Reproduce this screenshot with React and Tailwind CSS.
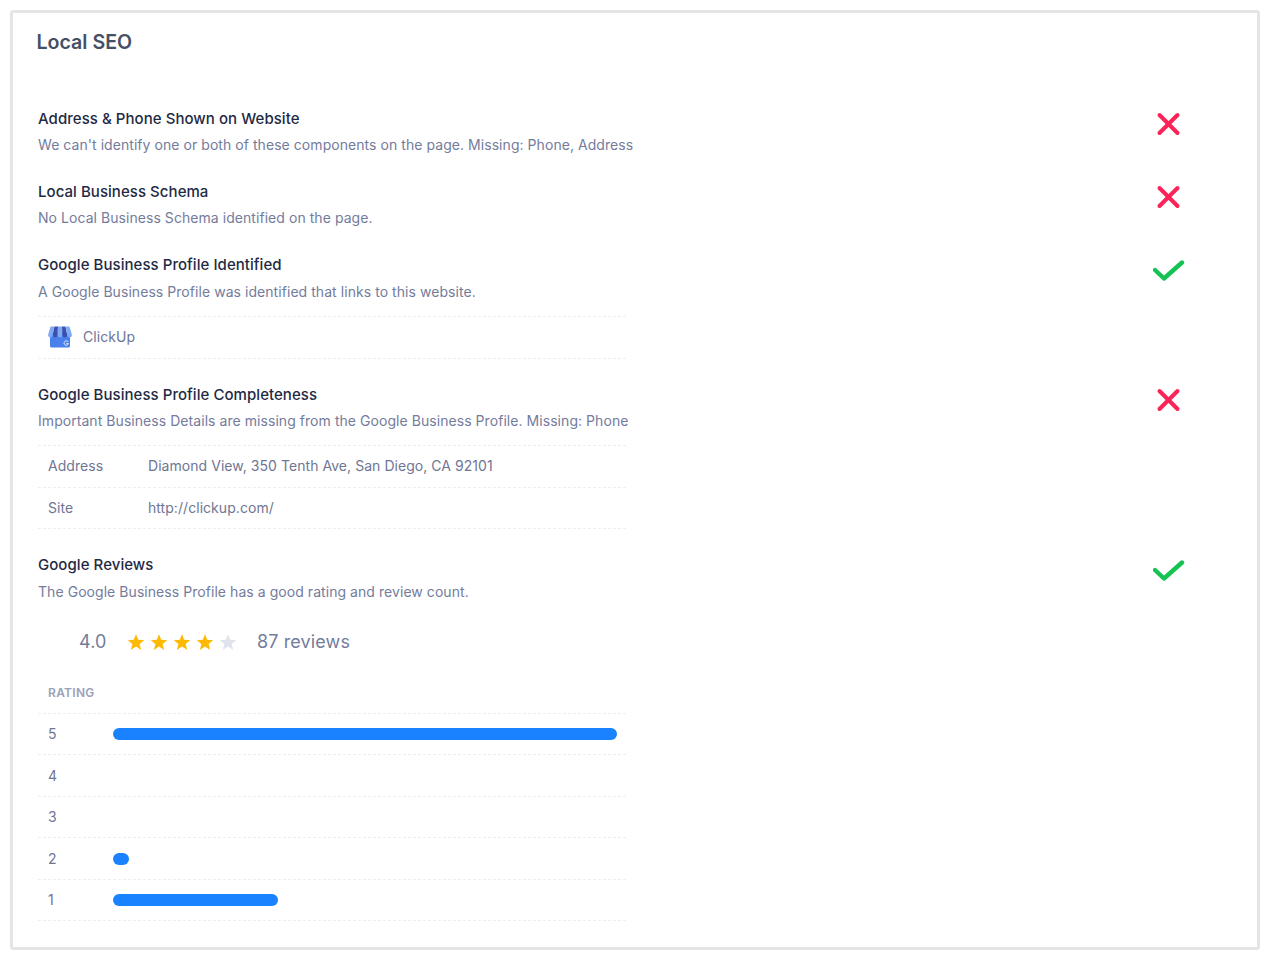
const font = { fontFamily: "Inter, sans-serif" };

function Cross() {
  return (
    <svg width="32" height="32" viewBox="0 0 32 32" fill="none" stroke="#fb2457" strokeWidth="4" strokeLinecap="round">
      <path d="M6.5 7 L24.5 25" />
      <path d="M24.5 7 L6.5 25" />
    </svg>
  );
}

function Check() {
  return (
    <svg width="32" height="32" viewBox="0 0 32 32" fill="none" stroke="#16c254" strokeWidth="4.4" strokeLinecap="round" strokeLinejoin="round">
      <path d="M2 16 L11 24.5 L29 8.5" />
    </svg>
  );
}

function Star({ on }) {
  return (
    <svg width="18" height="18" viewBox="0 0 24 24" fill={on ? "#fcba03" : "#dfe3ec"}>
      <path d="M12 1.5 L15 9 L23 9.5 L16.8 14.6 L18.9 22.5 L12 18.1 L5.1 22.5 L7.2 14.6 L1 9.5 L9 9 Z" />
    </svg>
  );
}

function GbpIcon() {
  return (
    <svg width="24" height="22" viewBox="0 0 24 22">
      <path d="M2 6 H22 V20 A1.5 1.5 0 0 1 20.5 21.5 H3.5 A1.5 1.5 0 0 1 2 20 Z" fill="#4a80ec" />
      <path d="M2.5 0.5 H6.5 L4.8 9 A2.4 2.4 0 0 1 0 9 Z" fill="#7fabf5" />
      <path d="M6.5 0.5 H10 L9.6 9 A2.4 2.4 0 0 1 4.8 9 Z" fill="#3c4fb0" />
      <path d="M10 0.5 H14 L14.4 9 A2.4 2.4 0 0 1 9.6 9 Z" fill="#7fabf5" />
      <path d="M14 0.5 H17.5 L19.2 9 A2.4 2.4 0 0 1 14.4 9 Z" fill="#3c4fb0" />
      <path d="M17.5 0.5 H21.5 L24 9 A2.4 2.4 0 0 1 19.2 9 Z" fill="#7fabf5" />
      <path d="M20.2 16 A2.2 2.2 0 1 0 20.4 17.6 H18.4" fill="none" stroke="#e8f0fe" strokeWidth="1" />
    </svg>
  );
}

function Item({ title, desc, ok, descGap = "mt-[2.5px]", children }) {
  return (
    <div className="flex justify-between">
      <div className="w-[588px]">
        <h4 className="text-[15px] leading-[24px] font-medium tracking-[0.05px] text-[#1f2a44] whitespace-nowrap">{title}</h4>
        <p className={`${descGap} text-[14px] leading-[24px] tracking-[0.055px] text-[#747c9c] whitespace-nowrap`}>{desc}</p>
        {children}
      </div>
      <div className="mr-[72px] mt-[1px] shrink-0">{ok ? <Check /> : <Cross />}</div>
    </div>
  );
}

function DetailRow({ label, value }) {
  return (
    <div className="flex items-center h-[41.5px] px-[10px] border-b border-dashed border-[#eceef2] text-[14px] tracking-[0.05px] text-[#6f7694]">
      <span className="w-[100px] mt-[-1px]">{label}</span>
      <span className="mt-[-1px]">{value}</span>
    </div>
  );
}

function RatingRow({ n, width }) {
  return (
    <div className="flex items-center h-[41.5px] px-[10px] border-b border-dashed border-[#eceef2] text-[14px] text-[#6f7694]">
      <span className="w-[65px] shrink-0 mt-[-1px]">{n}</span>
      {width > 0 && <div className="h-[12px] shrink-0 rounded-full bg-[#1a82ff]" style={{ width }} />}
    </div>
  );
}

export default function App() {
  return (
    <div style={font} className="w-[1270px] h-[960px] bg-white pl-[9.5px] pt-[10px]">
      <div className="h-[940px] w-[1250.5px] border-[3px] border-[#e5e5e5] rounded-[3px] pt-[15px] pl-[25.5px]">
        <h3 className="text-[19.6px] leading-[28px] font-[560] text-[#465064] ml-[-1.5px]">Local SEO</h3>

        <div className="mt-[51px]">
          <Item
            descGap="mt-[2px]"
            title="Address & Phone Shown on Website"
            desc="We can't identify one or both of these components on the page. Missing: Phone, Address"
          />
        </div>
        <div className="mt-[23px]">
          <Item
            descGap="mt-[2px]"
            title="Local Business Schema"
            desc="No Local Business Schema identified on the page."
          />
        </div>
        <div className="mt-[23px]">
          <Item
            ok
            title="Google Business Profile Identified"
            desc="A Google Business Profile was identified that links to this website."
          >
            <div className="mt-[12px] flex items-center gap-[11px] h-[43px] px-[10px] border-y border-dashed border-[#eceef2] text-[14px] tracking-[0.05px] text-[#6f7694]">
              <GbpIcon />
              <span className="mt-[-1px]">ClickUp</span>
            </div>
          </Item>
        </div>
        <div className="mt-[24px]">
          <Item
            title="Google Business Profile Completeness"
            desc="Important Business Details are missing from the Google Business Profile. Missing: Phone"
          >
            <div className="mt-[12px] border-t border-dashed border-[#eceef2]">
              <DetailRow label="Address" value="Diamond View, 350 Tenth Ave, San Diego, CA 92101" />
              <DetailRow label="Site" value="http://clickup.com/" />
            </div>
          </Item>
        </div>
        <div className="mt-[23.5px]">
          <Item
            ok
            descGap="mt-[3px]"
            title="Google Reviews"
            desc="The Google Business Profile has a good rating and review count."
          >
            <div className="mt-[24px] flex items-center h-[28px] pl-[41px] text-[#747c9c] text-[18px] tracking-[0.12px]">
              <span className="w-[48px]">4.0</span>
              <span className="flex gap-[5px]">
                <Star on />
                <Star on />
                <Star on />
                <Star on />
                <Star />
              </span>
              <span className="ml-[20px]">87 reviews</span>
            </div>
            <div className="mt-[25px] h-[33.4px] px-[10px] text-[12px] font-semibold tracking-[0.3px] leading-[24px] text-[#9aa1b9] border-b border-dashed border-[#eceef2]">
              RATING
            </div>
            <RatingRow n="5" width={504} />
            <RatingRow n="4" width={0} />
            <RatingRow n="3" width={0} />
            <RatingRow n="2" width={16} />
            <RatingRow n="1" width={165} />
          </Item>
        </div>
      </div>
    </div>
  );
}
